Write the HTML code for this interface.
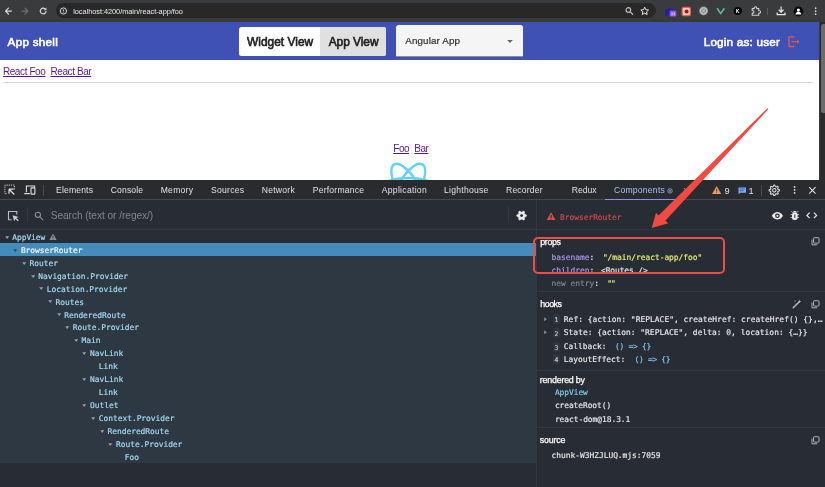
<!DOCTYPE html>
<html><head><meta charset="utf-8"><title>App shell</title>
<style>
*{box-sizing:border-box;margin:0;padding:0}
html,body{width:825px;height:487px;overflow:hidden;background:#fff;font-family:"Liberation Sans",sans-serif}
#wrap{position:absolute;left:0;top:0;width:825px;height:487px;overflow:hidden;will-change:transform;transform:translateZ(0)}
.abs{position:absolute;white-space:pre}
#chrome{left:0;top:0;width:825px;height:22px;background:#3a3b3c;border-bottom:3px solid #373a35}
#url{left:55.6px;top:2.9px;width:600.8px;height:15px;border-radius:7.5px;background:#282828}
#appbar{left:0;top:21.6px;width:819.3px;height:38.5px;background:#3f51b5}
#toggle{left:238.8px;top:26.8px;width:147.2px;height:29.6px;background:#fff;border-radius:2.5px;overflow:hidden}
#tg2{left:81.5px;top:0;width:66px;height:30px;background:#e0e0e0}
#select{left:395.6px;top:24.8px;width:127.1px;height:32.4px;background:#f5f5f5;border-radius:2.5px 2.5px 0 0;border-bottom:.6px solid #8e8e8e}
#hr{left:2.9px;top:81.5px;width:810px;height:1.2px;background:#dadada}
#scroll{left:819.3px;top:21.9px;width:5.7px;height:158px;background:#2b2b2b;border-left:1px solid #3a3a3a}
#thumb{left:821px;top:23.7px;width:4px;height:89px;background:#6b6b6b;border-radius:2px 0 0 2px}
#dt{left:0;top:179.8px;width:825px;height:307.2px;background:#282c34}
#tabs{left:0;top:179.8px;width:825px;height:20.1px;background:#2a2b2e;border-bottom:1px solid #47494e}
#tree{left:0;top:256px;width:536.2px;height:207.4px;background:#2d3843}
#row0{left:0;top:229.8px;width:536.2px;height:13.6px;background:#292d36}
#sel{left:0;top:243.3px;width:536.2px;height:12.9px;background:#448cbc}
.hl{height:1px;background:#333840}
.vl{width:1px;background:#333840}
</style></head><body>
<div id="wrap">
<div class="abs" id="chrome"></div><div class="abs" id="url"></div>
<div class="abs" style="left:73.2px;top:6.5px;font-family:'Liberation Sans',sans-serif;font-size:7.4px;line-height:9.6px;color:#e8eaed;letter-spacing:-0.05px;">localhost:4200/main/react-app/foo</div>
<svg class="abs" style="left:0px;top:0px" width="60" height="22" viewBox="0 0 60 22"><g fill="none" stroke="#d7d8da" stroke-width="1.2" stroke-linecap="round" stroke-linejoin="round"><path d="M11.4 11.1H5.6M8.4 8.2L5.5 11.1l2.9 2.9"/></g><g fill="none" stroke="#6f7073" stroke-width="1.2" stroke-linecap="round" stroke-linejoin="round"><path d="M22 11.1h5.8M25 8.2l2.9 2.9-2.9 2.9"/></g><g fill="none" stroke="#d7d8da" stroke-width="1.2" stroke-linecap="round"><path d="M45.6 9.4A2.9 2.9 0 1 0 46 11.6"/></g><path d="M46.4 7.6v2.6h-2.6z" fill="#d7d8da"/></svg><svg class="abs" style="left:56px;top:3px" width="16" height="16" viewBox="0 0 16 16"><circle cx="7.4" cy="8" r="5.6" fill="#2c2d30"/><circle cx="7.4" cy="8" r="3.1" fill="none" stroke="#e3e4e6" stroke-width=".9"/><path d="M7.4 6.3v2.2M7.4 9.2v.6" stroke="#e3e4e6" stroke-width=".8"/></svg><svg class="abs" style="left:622px;top:3px" width="32" height="16" viewBox="0 0 32 16"><circle cx="6.4" cy="7" r="2.3" fill="none" stroke="#b9bbbf" stroke-width="1.2"/><path d="M8.2 8.9l2.4 2.4" stroke="#b9bbbf" stroke-width="1.3" stroke-linecap="round"/><path d="M22.7 4.2l1.15 2.5 2.7.3-2 1.85.55 2.7-2.4-1.4-2.4 1.4.55-2.7-2-1.85 2.7-.3z" fill="none" stroke="#e6e7e9" stroke-width="1" stroke-linejoin="round"/></svg><svg class="abs" style="left:664px;top:6px" width="14" height="12" viewBox="0 0 14 12"><path d="M1.2 4.2L6 1.6l4.8 2.6v5.2H1.2z" fill="#2a1c9c"/><rect x="5.6" y="4.6" width="6.8" height="6" rx="1.4" fill="#8358ee"/><path d="M8 6.3v3.2M10.2 6.3v3.2" stroke="#fff" stroke-width=".8"/></svg><svg class="abs" style="left:681px;top:6px" width="11" height="11" viewBox="0 0 11 11"><rect x=".6" y=".8" width="9.4" height="9.4" rx="2" fill="#e8634e"/><rect x="1.8" y="2" width="7" height="7" rx="1.2" fill="#f6c9bd"/><circle cx="5.6" cy="5.6" r="2" fill="#a51414"/></svg><svg class="abs" style="left:698px;top:5px" width="12" height="12" viewBox="0 0 12 12"><circle cx="5.6" cy="5.9" r="4.5" fill="#8e8f91"/><circle cx="5.6" cy="5.9" r="3.2" fill="none" stroke="#cfd0d2" stroke-width=".9"/><path d="M4.3 4.4l2.6 3M6.9 4.4l-2.6 3" stroke="#cfd0d2" stroke-width=".8"/></svg><svg class="abs" style="left:716px;top:7px" width="10" height="8" viewBox="0 0 10 8"><path d="M1.1 1.3l3.6 5.2 3.6-5.2" fill="none" stroke="#5dbd98" stroke-width="1.5"/></svg><svg class="abs" style="left:733px;top:6px" width="10" height="10" viewBox="0 0 10 10"><circle cx="4.8" cy="5" r="4.1" fill="#050505"/><path d="M3.7 3v4M3.9 5.1l2-2.1M4.3 4.7l1.8 2.3" stroke="#fff" stroke-width=".9" fill="none"/></svg><svg class="abs" style="left:750px;top:5px" width="12" height="12" viewBox="0 0 12 12"><path d="M2.2 3.6h2.1a1.3 1.3 0 1 1 2.4 0h2.1v2.1a1.3 1.3 0 1 1 0 2.4v2.1H2.2V8.1a1.3 1.3 0 1 0 0-2.4z" fill="none" stroke="#cfd0d2" stroke-width="1.05" stroke-linejoin="round"/></svg><div class="abs" style="left:767.4px;top:7.9px;width:1px;height:7.2px;background:#5c5d60"></div><svg class="abs" style="left:775px;top:5px" width="12" height="12" viewBox="0 0 12 12"><path d="M6.1 1.6v5.2M3.7 4.7l2.4 2.4 2.4-2.4" fill="none" stroke="#e6e7e9" stroke-width="1.25"/><path d="M2.2 7.6v2.1h7.8V7.6" fill="none" stroke="#e6e7e9" stroke-width="1.25"/></svg><svg class="abs" style="left:793px;top:5.5px" width="11" height="11" viewBox="0 0 11 11"><circle cx="5.4" cy="5.5" r="4.9" fill="#0b0b0c"/><circle cx="5.4" cy="4.1" r="1.55" fill="#fff"/><path d="M2.5 8.4c0-1.7 1.4-2.3 2.9-2.3s2.9.6 2.9 2.3z" fill="#fff"/></svg><svg class="abs" style="left:813px;top:6px" width="5" height="10" viewBox="0 0 5 10"><circle cx="2.6" cy="2.2" r=".85" fill="#d7d8da"/><circle cx="2.6" cy="5.2" r=".85" fill="#d7d8da"/><circle cx="2.6" cy="8.2" r=".85" fill="#d7d8da"/></svg>
<div class="abs" id="appbar"></div>
<div class="abs" style="left:7.6px;top:34.2px;font-family:'Liberation Sans',sans-serif;font-size:11.7px;line-height:15.2px;color:#fff;letter-spacing:0.27px;-webkit-text-stroke:.6px #fff;">App shell</div>
<div class="abs" id="toggle"><div class="abs" id="tg2"></div></div>
<div class="abs" style="left:247.0px;top:35.0px;font-family:'Liberation Sans',sans-serif;font-size:11.9px;line-height:15.5px;color:#212121;letter-spacing:0.03px;-webkit-text-stroke:.6px #212121;">Widget View</div>
<div class="abs" style="left:328.7px;top:35.0px;font-family:'Liberation Sans',sans-serif;font-size:11.9px;line-height:15.5px;color:#212121;letter-spacing:-0.03px;-webkit-text-stroke:.6px #212121;">App View</div>
<div class="abs" id="select"></div>
<div class="abs" style="left:405.3px;top:34.8px;font-family:'Liberation Sans',sans-serif;font-size:9.8px;line-height:12.7px;color:#2e2e2e;letter-spacing:0.13px;-webkit-text-stroke:.2px #2e2e2e;">Angular App</div>
<svg class="abs" style="left:507.3px;top:40.2px" width="6" height="3" viewBox="0 0 6 3"><path d="M.2 .1h5.6L3 2.9z" fill="#666"/></svg>
<div class="abs" style="left:703.7px;top:34.2px;font-family:'Liberation Sans',sans-serif;font-size:11.7px;line-height:15.2px;color:#fff;letter-spacing:0.21px;-webkit-text-stroke:.6px #fff;">Login as: user</div>
<svg class="abs" style="left:787px;top:35px" width="14" height="14" viewBox="0 0 14 14"><path d="M7.2 1.9H2v9.6h5.2" fill="none" stroke="#e2574f" stroke-width="1.3"/><path d="M4.6 6.7h7" stroke="#e2574f" stroke-width="1.3"/><path d="M10 4.4l2.6 2.3L10 9z" fill="#e2574f"/></svg>
<div class="abs" style="left:2.9px;top:65.2px;font-family:'Liberation Sans',sans-serif;font-size:10px;line-height:13.0px;color:#551a8b;letter-spacing:-0.40px;text-decoration:underline;text-underline-offset:0.5px;text-decoration-thickness:0.8px;">React Foo</div>
<div class="abs" style="left:50.5px;top:65.2px;font-family:'Liberation Sans',sans-serif;font-size:10px;line-height:13.0px;color:#551a8b;letter-spacing:-0.42px;text-decoration:underline;text-underline-offset:0.5px;text-decoration-thickness:0.8px;">React Bar</div>
<div class="abs" id="hr"></div>
<div class="abs" style="left:393.2px;top:141.6px;font-family:'Liberation Sans',sans-serif;font-size:10px;line-height:13.0px;color:#551a8b;letter-spacing:-0.41px;text-decoration:underline;text-underline-offset:0.5px;text-decoration-thickness:0.8px;">Foo</div>
<div class="abs" style="left:414.3px;top:141.6px;font-family:'Liberation Sans',sans-serif;font-size:10px;line-height:13.0px;color:#551a8b;letter-spacing:-0.49px;text-decoration:underline;text-underline-offset:0.5px;text-decoration-thickness:0.8px;">Bar</div>
<svg class="abs" style="left:370px;top:150px" width="80" height="30" viewBox="370 150 80 30"><g fill="none" stroke="#61d3f3" stroke-width="2.43" transform="translate(408.3 188.8) scale(2.56)"><g stroke-width="0.95"><ellipse rx="11" ry="4.2"/><ellipse rx="11" ry="4.2" transform="rotate(60)"/><ellipse rx="11" ry="4.2" transform="rotate(120)"/></g></g></svg>
<div class="abs" id="scroll"></div><div class="abs" id="thumb"></div>
<div class="abs" id="dt"></div><div class="abs" id="tabs"></div>
<div class="abs" style="left:56.0px;top:184.7px;font-family:'Liberation Sans',sans-serif;font-size:8.6px;line-height:11.2px;color:#dfe1e5;letter-spacing:0.16px;">Elements</div>
<div class="abs" style="left:110.7px;top:184.7px;font-family:'Liberation Sans',sans-serif;font-size:8.6px;line-height:11.2px;color:#dfe1e5;letter-spacing:0.15px;">Console</div>
<div class="abs" style="left:160.7px;top:184.7px;font-family:'Liberation Sans',sans-serif;font-size:8.6px;line-height:11.2px;color:#dfe1e5;letter-spacing:0.26px;">Memory</div>
<div class="abs" style="left:211.0px;top:184.7px;font-family:'Liberation Sans',sans-serif;font-size:8.6px;line-height:11.2px;color:#dfe1e5;letter-spacing:0.25px;">Sources</div>
<div class="abs" style="left:261.7px;top:184.7px;font-family:'Liberation Sans',sans-serif;font-size:8.6px;line-height:11.2px;color:#dfe1e5;letter-spacing:0.25px;">Network</div>
<div class="abs" style="left:312.7px;top:184.7px;font-family:'Liberation Sans',sans-serif;font-size:8.6px;line-height:11.2px;color:#dfe1e5;letter-spacing:0.22px;">Performance</div>
<div class="abs" style="left:381.7px;top:184.7px;font-family:'Liberation Sans',sans-serif;font-size:8.6px;line-height:11.2px;color:#dfe1e5;letter-spacing:0.30px;">Application</div>
<div class="abs" style="left:444.0px;top:184.7px;font-family:'Liberation Sans',sans-serif;font-size:8.6px;line-height:11.2px;color:#dfe1e5;letter-spacing:0.26px;">Lighthouse</div>
<div class="abs" style="left:506.0px;top:184.7px;font-family:'Liberation Sans',sans-serif;font-size:8.6px;line-height:11.2px;color:#dfe1e5;letter-spacing:0.17px;">Recorder</div>
<div class="abs" style="left:571.7px;top:184.7px;font-family:'Liberation Sans',sans-serif;font-size:8.6px;line-height:11.2px;color:#dfe1e5;letter-spacing:0.03px;">Redux</div>
<div class="abs" style="left:614.0px;top:184.7px;font-family:'Liberation Sans',sans-serif;font-size:8.6px;line-height:11.2px;color:#a9c1f7;letter-spacing:0.23px;">Components</div>
<div class="abs" style="left:605px;top:198.6px;width:72.3px;height:1.5px;background:#8b93e6"></div>
<div class="abs" style="left:724.4px;top:184.6px;font-family:'Liberation Sans',sans-serif;font-size:9.2px;line-height:12.0px;color:#dfe1e5;letter-spacing:0.08px;">9</div>
<div class="abs" style="left:748.4px;top:184.6px;font-family:'Liberation Sans',sans-serif;font-size:9.2px;line-height:12.0px;color:#dfe1e5;letter-spacing:-0.12px;">1</div>
<svg class="abs" style="left:3px;top:183px" width="14" height="14" viewBox="0 0 14 14"><path d="M7 2.1H1.9v8.6H4" fill="none" stroke="#c7cacf" stroke-width="1" stroke-dasharray="1.3 .9"/><path d="M11.4 6.5V2.1H7" fill="none" stroke="#c7cacf" stroke-width="1" stroke-dasharray="1.3 .9"/><path d="M6 6.2h4.6M6 6.2v4.6M6.3 6.5l5 5" fill="none" stroke="#dfe1e5" stroke-width="1.2"/></svg><svg class="abs" style="left:23px;top:183.5px" width="14" height="12" viewBox="0 0 14 12"><path d="M3.4 8.2V2h8.2v1.6" fill="none" stroke="#dfe1e5" stroke-width="1.1"/><path d="M1.2 9.6h5.6" stroke="#dfe1e5" stroke-width="1.2"/><rect x="8" y="3.9" width="3.9" height="6.2" rx=".7" fill="none" stroke="#dfe1e5" stroke-width="1.1"/></svg><div class="abs" style="left:43px;top:184.5px;width:1px;height:11px;background:#4a4c50"></div><svg class="abs" style="left:667px;top:187.5px" width="6" height="6" viewBox="0 0 6 6"><circle cx="3" cy="2.9" r="2.2" fill="none" stroke="#8fb0f0" stroke-width=".8"/><circle cx="3" cy="2.9" r=".8" fill="#8fb0f0"/></svg><svg class="abs" style="left:683px;top:187px" width="7" height="7" viewBox="0 0 7 7"><path d="M1 1.2l2.2 2.2L1 5.6M4 1.2l2.2 2.2L4 5.6" fill="none" stroke="#c7cacf" stroke-width=".9"/></svg><svg class="abs" style="left:712px;top:185.8px" width="9.4" height="8.4" viewBox="0 0 9.4 8.4"><path d="M4.7 .5L9 7.9H.4z" fill="#f39a6b" stroke="#f39a6b" stroke-width=".5" stroke-linejoin="round"/><path d="M4.7 3v2.6M4.7 6.3v.8" stroke="#4a2a18" stroke-width=".9"/></svg><svg class="abs" style="left:737.6px;top:186.6px" width="8.6" height="7.6" viewBox="0 0 8.6 7.6"><path d="M.5 .5h7.6v5.3H2.4L.5 7.3z" fill="#7eaaf5"/><path d="M1.8 2h5M1.8 3.7h3.6" stroke="#3a5cb0" stroke-width=".9"/></svg><div class="abs" style="left:761px;top:184.5px;width:1px;height:11px;background:#4a4c50"></div><svg class="abs" style="left:767px;top:182.5px" width="15" height="15" viewBox="0 0 15 15"><polygon points="12.47,6.79 12.47,7.81 10.98,8.42 10.69,9.11 11.32,10.60 10.60,11.32 9.11,10.69 8.42,10.98 7.81,12.47 6.79,12.47 6.18,10.98 5.49,10.69 4.00,11.32 3.28,10.60 3.91,9.11 3.62,8.42 2.13,7.81 2.13,6.79 3.62,6.18 3.91,5.49 3.28,4.00 4.00,3.28 5.49,3.91 6.18,3.62 6.79,2.13 7.81,2.13 8.42,3.62 9.11,3.91 10.60,3.28 11.32,4.00 10.69,5.49 10.98,6.18" fill="none" stroke="#dfe1e5" stroke-width="1.05" stroke-linejoin="round"/><circle cx="7.3" cy="7.3" r="1.72" fill="none" stroke="#dfe1e5" stroke-width="1.05"/></svg><svg class="abs" style="left:792px;top:185px" width="5" height="10" viewBox="0 0 5 10"><circle cx="2.6" cy="1.9" r=".9" fill="#dfe1e5"/><circle cx="2.6" cy="4.9" r=".9" fill="#dfe1e5"/><circle cx="2.6" cy="7.9" r=".9" fill="#dfe1e5"/></svg><svg class="abs" style="left:808px;top:185.5px" width="9" height="9" viewBox="0 0 9 9"><path d="M1.2 1.2l6.4 6.4M7.6 1.2L1.2 7.6" stroke="#dfe1e5" stroke-width="1.05"/></svg><svg class="abs" style="left:6.5px;top:209.5px" width="13" height="13" viewBox="0 0 13 13"><path d="M9.8 4.6V1.5H1.5v8.3h3" fill="none" stroke="#b9bec7" stroke-width="1.1"/><path d="M5.6 5.2l1.5 6 1.3-2.3 2.5 2.3.9-1-2.5-2.2 2.3-1z" fill="#c9cdd4"/></svg><svg class="abs" style="left:33.5px;top:211px" width="10" height="10" viewBox="0 0 10 10"><circle cx="3.9" cy="3.8" r="2.6" fill="none" stroke="#868b95" stroke-width="1.1"/><path d="M5.9 5.8l3 3" stroke="#868b95" stroke-width="1.2" stroke-linecap="round"/></svg><svg class="abs" style="left:515px;top:208.5px" width="13" height="13" viewBox="0 0 13 13"><polygon points="11.46,5.96 11.46,7.24 9.95,7.99 9.48,8.81 9.58,10.49 8.48,11.13 7.07,10.19 6.13,10.19 4.72,11.13 3.62,10.49 3.72,8.81 3.25,7.99 1.74,7.24 1.74,5.96 3.25,5.21 3.72,4.39 3.62,2.71 4.72,2.07 6.13,3.01 7.07,3.01 8.48,2.07 9.58,2.71 9.48,4.39 9.95,5.21" fill="#e8eaee" stroke="#e8eaee" stroke-width=".5" stroke-linejoin="round"/><circle cx="6.6" cy="6.6" r="1.47" fill="#282c34"/></svg>
<div class="abs hl" style="left:0;top:228.8px;width:825px"></div>
<div class="abs" id="row0"></div><div class="abs" id="tree"></div><div class="abs" id="sel"></div>
<div class="abs vl" style="left:536.2px;top:200px;height:287px"></div>
<div class="abs vl" style="left:508px;top:206px;height:17px"></div>
<div class="abs vl" style="left:27px;top:207px;height:15px"></div>
<div class="abs" style="left:50.7px;top:208.7px;font-family:'Liberation Sans',sans-serif;font-size:10.1px;line-height:13.1px;color:#80858f;letter-spacing:-0.03px;">Search (text or /regex/)</div>
<svg class="abs" style="left:4.5px;top:235.6px" width="4.4" height="3" viewBox="0 0 4.4 3"><path d="M.2 .2h4L2.2 2.9z" fill="#969eaa"/></svg>
<div class="abs" style="left:12.2px;top:232.7px;font-family:'DejaVu Sans Mono','Liberation Mono',monospace;font-size:7.9px;line-height:10.3px;color:#a3ddf4;letter-spacing:-0.02px;-webkit-text-stroke:.18px #a3ddf4;">AppView</div>
<svg class="abs" style="left:13.2px;top:248.6px" width="4.4" height="3" viewBox="0 0 4.4 3"><path d="M.2 .2h4L2.2 2.9z" fill="#1c4f72"/></svg>
<div class="abs" style="left:20.9px;top:245.7px;font-family:'DejaVu Sans Mono','Liberation Mono',monospace;font-size:7.9px;line-height:10.3px;color:#f2f9fd;letter-spacing:-0.02px;-webkit-text-stroke:.18px #f2f9fd;">BrowserRouter</div>
<svg class="abs" style="left:21.8px;top:261.5px" width="4.4" height="3" viewBox="0 0 4.4 3"><path d="M.2 .2h4L2.2 2.9z" fill="#969eaa"/></svg>
<div class="abs" style="left:29.5px;top:258.6px;font-family:'DejaVu Sans Mono','Liberation Mono',monospace;font-size:7.9px;line-height:10.3px;color:#a3ddf4;letter-spacing:-0.02px;-webkit-text-stroke:.18px #a3ddf4;">Router</div>
<svg class="abs" style="left:30.5px;top:274.5px" width="4.4" height="3" viewBox="0 0 4.4 3"><path d="M.2 .2h4L2.2 2.9z" fill="#969eaa"/></svg>
<div class="abs" style="left:38.2px;top:271.6px;font-family:'DejaVu Sans Mono','Liberation Mono',monospace;font-size:7.9px;line-height:10.3px;color:#a3ddf4;letter-spacing:-0.02px;-webkit-text-stroke:.18px #a3ddf4;">Navigation.Provider</div>
<svg class="abs" style="left:39.1px;top:287.4px" width="4.4" height="3" viewBox="0 0 4.4 3"><path d="M.2 .2h4L2.2 2.9z" fill="#969eaa"/></svg>
<div class="abs" style="left:46.8px;top:284.6px;font-family:'DejaVu Sans Mono','Liberation Mono',monospace;font-size:7.9px;line-height:10.3px;color:#a3ddf4;letter-spacing:-0.02px;-webkit-text-stroke:.18px #a3ddf4;">Location.Provider</div>
<svg class="abs" style="left:47.8px;top:300.4px" width="4.4" height="3" viewBox="0 0 4.4 3"><path d="M.2 .2h4L2.2 2.9z" fill="#969eaa"/></svg>
<div class="abs" style="left:55.5px;top:297.5px;font-family:'DejaVu Sans Mono','Liberation Mono',monospace;font-size:7.9px;line-height:10.3px;color:#a3ddf4;letter-spacing:-0.02px;-webkit-text-stroke:.18px #a3ddf4;">Routes</div>
<svg class="abs" style="left:56.5px;top:313.4px" width="4.4" height="3" viewBox="0 0 4.4 3"><path d="M.2 .2h4L2.2 2.9z" fill="#969eaa"/></svg>
<div class="abs" style="left:64.2px;top:310.5px;font-family:'DejaVu Sans Mono','Liberation Mono',monospace;font-size:7.9px;line-height:10.3px;color:#a3ddf4;letter-spacing:-0.02px;-webkit-text-stroke:.18px #a3ddf4;">RenderedRoute</div>
<svg class="abs" style="left:65.1px;top:326.3px" width="4.4" height="3" viewBox="0 0 4.4 3"><path d="M.2 .2h4L2.2 2.9z" fill="#969eaa"/></svg>
<div class="abs" style="left:72.8px;top:323.4px;font-family:'DejaVu Sans Mono','Liberation Mono',monospace;font-size:7.9px;line-height:10.3px;color:#a3ddf4;letter-spacing:-0.02px;-webkit-text-stroke:.18px #a3ddf4;">Route.Provider</div>
<svg class="abs" style="left:73.8px;top:339.3px" width="4.4" height="3" viewBox="0 0 4.4 3"><path d="M.2 .2h4L2.2 2.9z" fill="#969eaa"/></svg>
<div class="abs" style="left:81.5px;top:336.4px;font-family:'DejaVu Sans Mono','Liberation Mono',monospace;font-size:7.9px;line-height:10.3px;color:#a3ddf4;letter-spacing:-0.02px;-webkit-text-stroke:.18px #a3ddf4;">Main</div>
<svg class="abs" style="left:82.4px;top:352.2px" width="4.4" height="3" viewBox="0 0 4.4 3"><path d="M.2 .2h4L2.2 2.9z" fill="#969eaa"/></svg>
<div class="abs" style="left:90.1px;top:349.4px;font-family:'DejaVu Sans Mono','Liberation Mono',monospace;font-size:7.9px;line-height:10.3px;color:#a3ddf4;letter-spacing:-0.02px;-webkit-text-stroke:.18px #a3ddf4;">NavLink</div>
<div class="abs" style="left:98.8px;top:362.3px;font-family:'DejaVu Sans Mono','Liberation Mono',monospace;font-size:7.9px;line-height:10.3px;color:#a3ddf4;letter-spacing:-0.02px;-webkit-text-stroke:.18px #a3ddf4;">Link</div>
<svg class="abs" style="left:82.4px;top:378.2px" width="4.4" height="3" viewBox="0 0 4.4 3"><path d="M.2 .2h4L2.2 2.9z" fill="#969eaa"/></svg>
<div class="abs" style="left:90.1px;top:375.3px;font-family:'DejaVu Sans Mono','Liberation Mono',monospace;font-size:7.9px;line-height:10.3px;color:#a3ddf4;letter-spacing:-0.02px;-webkit-text-stroke:.18px #a3ddf4;">NavLink</div>
<div class="abs" style="left:98.8px;top:388.2px;font-family:'DejaVu Sans Mono','Liberation Mono',monospace;font-size:7.9px;line-height:10.3px;color:#a3ddf4;letter-spacing:-0.02px;-webkit-text-stroke:.18px #a3ddf4;">Link</div>
<svg class="abs" style="left:82.4px;top:404.1px" width="4.4" height="3" viewBox="0 0 4.4 3"><path d="M.2 .2h4L2.2 2.9z" fill="#969eaa"/></svg>
<div class="abs" style="left:90.1px;top:401.2px;font-family:'DejaVu Sans Mono','Liberation Mono',monospace;font-size:7.9px;line-height:10.3px;color:#a3ddf4;letter-spacing:-0.02px;-webkit-text-stroke:.18px #a3ddf4;">Outlet</div>
<svg class="abs" style="left:91.1px;top:417.0px" width="4.4" height="3" viewBox="0 0 4.4 3"><path d="M.2 .2h4L2.2 2.9z" fill="#969eaa"/></svg>
<div class="abs" style="left:98.8px;top:414.2px;font-family:'DejaVu Sans Mono','Liberation Mono',monospace;font-size:7.9px;line-height:10.3px;color:#a3ddf4;letter-spacing:-0.02px;-webkit-text-stroke:.18px #a3ddf4;">Context.Provider</div>
<svg class="abs" style="left:99.8px;top:430.0px" width="4.4" height="3" viewBox="0 0 4.4 3"><path d="M.2 .2h4L2.2 2.9z" fill="#969eaa"/></svg>
<div class="abs" style="left:107.5px;top:427.1px;font-family:'DejaVu Sans Mono','Liberation Mono',monospace;font-size:7.9px;line-height:10.3px;color:#a3ddf4;letter-spacing:-0.02px;-webkit-text-stroke:.18px #a3ddf4;">RenderedRoute</div>
<svg class="abs" style="left:108.4px;top:443.0px" width="4.4" height="3" viewBox="0 0 4.4 3"><path d="M.2 .2h4L2.2 2.9z" fill="#969eaa"/></svg>
<div class="abs" style="left:116.1px;top:440.1px;font-family:'DejaVu Sans Mono','Liberation Mono',monospace;font-size:7.9px;line-height:10.3px;color:#a3ddf4;letter-spacing:-0.02px;-webkit-text-stroke:.18px #a3ddf4;">Route.Provider</div>
<div class="abs" style="left:124.8px;top:453.0px;font-family:'DejaVu Sans Mono','Liberation Mono',monospace;font-size:7.9px;line-height:10.3px;color:#a3ddf4;letter-spacing:-0.02px;-webkit-text-stroke:.18px #a3ddf4;">Foo</div>
<svg class="abs" style="left:49px;top:233.3px" width="8" height="8" viewBox="0 0 8 8"><path d="M4 .6L7.6 7H.4z" fill="#8a8f98"/><path d="M4 2.9v2.2M4 5.7v.7" stroke="#2a303a" stroke-width=".8"/></svg>
<svg class="abs" style="left:546.3px;top:211.6px" width="10.2" height="8.8" viewBox="0 0 10.2 8.8"><path d="M5.1 .3L9.9 8.5H.3z" fill="#e04a47"/><path d="M5.1 3v3M5.1 6.7v.9" stroke="#282c34" stroke-width="1.1"/></svg>
<div class="abs" style="left:560.1px;top:212.9px;font-family:'DejaVu Sans Mono','Liberation Mono',monospace;font-size:7.9px;line-height:10.3px;color:#d34a4b;letter-spacing:-0.03px;-webkit-text-stroke:.18px #d34a4b;">BrowserRouter</div>
<div class="abs" style="left:540.3px;top:237.1px;font-family:'Liberation Sans',sans-serif;font-size:8.9px;line-height:11.6px;color:#fff;letter-spacing:-0.40px;-webkit-text-stroke:.25px #fff;">props</div>
<div class="abs" style="left:551.5px;top:253.0px;font-family:'DejaVu Sans Mono','Liberation Mono',monospace;font-size:7.9px;line-height:10.3px;color:#a596ec;letter-spacing:0.01px;-webkit-text-stroke:.18px #a596ec;">basename</div>
<div class="abs" style="left:589.6px;top:253.0px;font-family:'DejaVu Sans Mono','Liberation Mono',monospace;font-size:7.9px;line-height:10.3px;color:#e4e6ea;letter-spacing:-0.01px;-webkit-text-stroke:.18px #e4e6ea;">:</div>
<div class="abs" style="left:602.9px;top:253.0px;font-family:'DejaVu Sans Mono','Liberation Mono',monospace;font-size:7.9px;line-height:10.3px;color:#e9ec6f;letter-spacing:-0.02px;-webkit-text-stroke:.18px #e9ec6f;">"/main/react-app/foo"</div>
<div class="abs" style="left:551.5px;top:265.8px;font-family:'DejaVu Sans Mono','Liberation Mono',monospace;font-size:7.9px;line-height:10.3px;color:#a596ec;letter-spacing:0.01px;-webkit-text-stroke:.18px #a596ec;">children</div>
<div class="abs" style="left:589.6px;top:265.8px;font-family:'DejaVu Sans Mono','Liberation Mono',monospace;font-size:7.9px;line-height:10.3px;color:#e4e6ea;letter-spacing:-0.01px;-webkit-text-stroke:.18px #e4e6ea;">:</div>
<div class="abs" style="left:601.0px;top:265.8px;font-family:'DejaVu Sans Mono','Liberation Mono',monospace;font-size:7.9px;line-height:10.3px;color:#e4e6ea;letter-spacing:-0.08px;-webkit-text-stroke:.18px #e4e6ea;">&lt;Routes /&gt;</div>
<div class="abs" style="left:551.5px;top:279.0px;font-family:'DejaVu Sans Mono','Liberation Mono',monospace;font-size:7.9px;line-height:10.3px;color:#7e848e;letter-spacing:0.01px;-webkit-text-stroke:.18px #7e848e;">new entry</div>
<div class="abs" style="left:594.3px;top:279.0px;font-family:'DejaVu Sans Mono','Liberation Mono',monospace;font-size:7.9px;line-height:10.3px;color:#e4e6ea;letter-spacing:-0.01px;-webkit-text-stroke:.18px #e4e6ea;">:</div>
<div class="abs" style="left:607.2px;top:279.0px;font-family:'DejaVu Sans Mono','Liberation Mono',monospace;font-size:7.9px;line-height:10.3px;color:#e9ec6f;letter-spacing:-0.86px;-webkit-text-stroke:.18px #e9ec6f;">""</div>
<div class="abs hl" style="left:537px;top:291.2px;width:288px"></div>
<div class="abs" style="left:540.3px;top:299.2px;font-family:'Liberation Sans',sans-serif;font-size:8.9px;line-height:11.6px;color:#fff;letter-spacing:-0.52px;-webkit-text-stroke:.25px #fff;">hooks</div>
<div class="abs" style="left:552.6px;top:314.3px;width:7.6px;height:10px;background:#30353e;border-radius:1.5px"></div>
<div class="abs" style="left:554.6px;top:316.3px;font-family:'DejaVu Sans Mono','Liberation Mono',monospace;font-size:6.4px;line-height:8.3px;color:#c5c9d0;letter-spacing:-0.26px;-webkit-text-stroke:.18px #c5c9d0;">1</div>
<div class="abs" style="left:552.6px;top:327.6px;width:7.6px;height:10px;background:#30353e;border-radius:1.5px"></div>
<div class="abs" style="left:554.6px;top:329.6px;font-family:'DejaVu Sans Mono','Liberation Mono',monospace;font-size:6.4px;line-height:8.3px;color:#c5c9d0;letter-spacing:-0.26px;-webkit-text-stroke:.18px #c5c9d0;">2</div>
<div class="abs" style="left:552.6px;top:341.6px;width:7.6px;height:10px;background:#30353e;border-radius:1.5px"></div>
<div class="abs" style="left:554.6px;top:343.6px;font-family:'DejaVu Sans Mono','Liberation Mono',monospace;font-size:6.4px;line-height:8.3px;color:#c5c9d0;letter-spacing:-0.26px;-webkit-text-stroke:.18px #c5c9d0;">3</div>
<div class="abs" style="left:552.6px;top:354.4px;width:7.6px;height:10px;background:#30353e;border-radius:1.5px"></div>
<div class="abs" style="left:554.6px;top:356.4px;font-family:'DejaVu Sans Mono','Liberation Mono',monospace;font-size:6.4px;line-height:8.3px;color:#c5c9d0;letter-spacing:-0.26px;-webkit-text-stroke:.18px #c5c9d0;">4</div>
<div class="abs" style="left:563.8px;top:315.1px;font-family:'DejaVu Sans Mono','Liberation Mono',monospace;font-size:7.9px;line-height:10.3px;color:#e4e6ea;letter-spacing:0.04px;-webkit-text-stroke:.18px #e4e6ea;">Ref: {action: "REPLACE", createHref: createHref() {},…</div>
<div class="abs" style="left:563.8px;top:328.4px;font-family:'DejaVu Sans Mono','Liberation Mono',monospace;font-size:7.9px;line-height:10.3px;color:#e4e6ea;letter-spacing:0.03px;-webkit-text-stroke:.18px #e4e6ea;">State: {action: "REPLACE", delta: 0, location: {…}}</div>
<div class="abs" style="left:563.8px;top:342.4px;font-family:'DejaVu Sans Mono','Liberation Mono',monospace;font-size:7.9px;line-height:10.3px;color:#e4e6ea;letter-spacing:-0.02px;-webkit-text-stroke:.18px #e4e6ea;">Callback:</div>
<div class="abs" style="left:615.1px;top:342.4px;font-family:'DejaVu Sans Mono','Liberation Mono',monospace;font-size:7.9px;line-height:10.3px;color:#82c6ea;letter-spacing:-0.26px;-webkit-text-stroke:.18px #82c6ea;">() =&gt; {}</div>
<div class="abs" style="left:563.8px;top:355.2px;font-family:'DejaVu Sans Mono','Liberation Mono',monospace;font-size:7.9px;line-height:10.3px;color:#e4e6ea;letter-spacing:-0.02px;-webkit-text-stroke:.18px #e4e6ea;">LayoutEffect:</div>
<div class="abs" style="left:634.5px;top:355.2px;font-family:'DejaVu Sans Mono','Liberation Mono',monospace;font-size:7.9px;line-height:10.3px;color:#82c6ea;letter-spacing:-0.28px;-webkit-text-stroke:.18px #82c6ea;">() =&gt; {}</div>
<svg class="abs" style="left:544.2px;top:317.0px" width="3" height="4.4" viewBox="0 0 3 4.4"><path d="M.2 .2v4L2.9 2.2z" fill="#87909b"/></svg>
<svg class="abs" style="left:544.2px;top:330.3px" width="3" height="4.4" viewBox="0 0 3 4.4"><path d="M.2 .2v4L2.9 2.2z" fill="#87909b"/></svg>
<div class="abs hl" style="left:537px;top:369.8px;width:288px"></div>
<div class="abs" style="left:539.8px;top:374.6px;font-family:'Liberation Sans',sans-serif;font-size:8.9px;line-height:11.6px;color:#fff;letter-spacing:-0.22px;-webkit-text-stroke:.25px #fff;">rendered by</div>
<div class="abs" style="left:554.9px;top:388.4px;font-family:'DejaVu Sans Mono','Liberation Mono',monospace;font-size:7.9px;line-height:10.3px;color:#82c6ea;letter-spacing:-0.05px;-webkit-text-stroke:.18px #82c6ea;">AppView</div>
<div class="abs" style="left:554.9px;top:401.2px;font-family:'DejaVu Sans Mono','Liberation Mono',monospace;font-size:7.9px;line-height:10.3px;color:#e4e6ea;letter-spacing:-0.07px;-webkit-text-stroke:.18px #e4e6ea;">createRoot()</div>
<div class="abs" style="left:554.9px;top:414.5px;font-family:'DejaVu Sans Mono','Liberation Mono',monospace;font-size:7.9px;line-height:10.3px;color:#e4e6ea;letter-spacing:-0.04px;-webkit-text-stroke:.18px #e4e6ea;">react-dom@18.3.1</div>
<div class="abs hl" style="left:537px;top:427.2px;width:288px"></div>
<div class="abs" style="left:539.8px;top:435.0px;font-family:'Liberation Sans',sans-serif;font-size:8.9px;line-height:11.6px;color:#fff;letter-spacing:-0.19px;-webkit-text-stroke:.25px #fff;">source</div>
<div class="abs" style="left:551.5px;top:451.0px;font-family:'DejaVu Sans Mono','Liberation Mono',monospace;font-size:7.9px;line-height:10.3px;color:#e4e6ea;letter-spacing:-0.01px;-webkit-text-stroke:.18px #e4e6ea;">chunk-W3HZJLUQ.mjs:7059</div>
<svg class="abs" style="left:771px;top:210.5px" width="13" height="10" viewBox="0 0 13 10"><path d="M.8 4.8C2.4 2.2 4.3 1 6.4 1s4 1.2 5.6 3.8C10.4 7.4 8.500 8.600 6.400 8.600S2.400 7.400 .800 4.800z" fill="#e8eaee"/><circle cx="6.4" cy="4.800" r="2.300" fill="#282c34"/><circle cx="6.400" cy="4.800" r="1.100" fill="#e8eaee"/></svg><svg class="abs" style="left:789.5px;top:210px" width="10" height="11" viewBox="0 0 10 11"><rect x="2" y="2.6" width="5.600" height="7.400" rx="2.500" fill="#e8eaee"/><path d="M3 2.600a1.800 1.800 0 0 1 3.600 0z" fill="#e8eaee"/><path d="M.6 4.600h8.400M.6 7.600h8.400M1.400 1.200l1.600 1.600M8.200 1.200L6.600 2.800" stroke="#e8eaee" stroke-width=".8"/><rect x="4.300" y="4.500" width="1" height="3.400" fill="#282c34"/></svg><svg class="abs" style="left:806px;top:212px" width="12" height="7" viewBox="0 0 12 7"><path d="M3.600 .600L.900 3.400l2.700 2.800M7.900 .600l2.700 2.800-2.700 2.800" fill="none" stroke="#e8eaee" stroke-width="1.200"/></svg><svg class="abs" style="left:810.5px;top:237px" width="9" height="9" viewBox="0 0 9 9"><rect x="2.6" y=".7" width="5.4" height="5.4" rx=".6" fill="none" stroke="#b4b9c2" stroke-width=".95"/><path d="M1 2.6v5.2h5.2" fill="none" stroke="#b4b9c2" stroke-width=".95"/></svg><svg class="abs" style="left:810.5px;top:299.5px" width="9" height="9" viewBox="0 0 9 9"><rect x="2.6" y=".7" width="5.4" height="5.4" rx=".6" fill="none" stroke="#b4b9c2" stroke-width=".95"/><path d="M1 2.6v5.2h5.2" fill="none" stroke="#b4b9c2" stroke-width=".95"/></svg><svg class="abs" style="left:810.5px;top:435.5px" width="9" height="9" viewBox="0 0 9 9"><rect x="2.6" y=".7" width="5.4" height="5.4" rx=".6" fill="none" stroke="#b4b9c2" stroke-width=".95"/><path d="M1 2.6v5.2h5.2" fill="none" stroke="#b4b9c2" stroke-width=".95"/></svg><svg class="abs" style="left:791.5px;top:299px" width="10" height="10" viewBox="0 0 10 10"><path d="M1.200 8.800L6.800 3.200" stroke="#b4b9c2" stroke-width="1.500" stroke-linecap="round"/><path d="M7.600 .600l.500 1.300 1.300.500-1.300.500-.500 1.300-.500-1.300-1.300-.500 1.300-.500zM3 1l.300.700.700.300-.700.300L3 3l-.300-.700L2 2l.700-.300z" fill="#b4b9c2"/></svg>
<div class="abs" style="left:533.3px;top:237.2px;width:191.4px;height:37px;border:2.3px solid #ea4f47;border-radius:5px"></div>
<svg class="abs" style="left:0;top:0" width="825" height="487" viewBox="0 0 825 487"><polygon points="767.3,108.3 658.5,215.6 656,212.7 651.7,228.1 668.4,223.2 665.3,220.7 768.3,109.3" fill="#f04a43"/></svg>
</div>
</body></html>
